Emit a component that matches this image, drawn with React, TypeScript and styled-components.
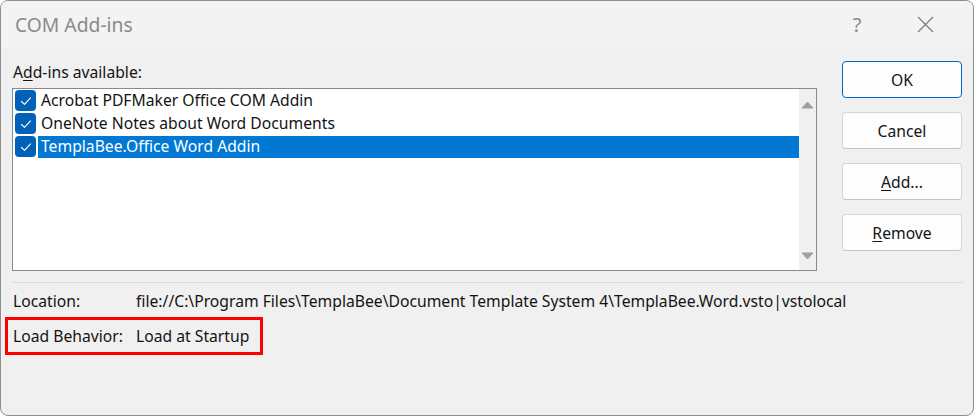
import React from "react";
import styled, { createGlobalStyle } from "styled-components";

const Global = createGlobalStyle`
  html, body { margin: 0; padding: 0; background: #ffffff; }
  body { font-family: "Noto Sans", "Open Sans", "Liberation Sans", sans-serif; }
  * { box-sizing: border-box; }
`;

const Window = styled.div`
  width: 974px;
  height: 416px;
  border: 1px solid #8e8e8e;
  border-radius: 8px;
  overflow: hidden;
  background: #f0f0f0;
  display: flex;
  flex-direction: column;
  color: #141414;
  font-size: 15.7px;
`;

const TitleBar = styled.div`
  height: 47px;
  flex: none;
  background: #f3f3f3;
  display: flex;
  align-items: center;
  padding-left: 14px;
`;

const Title = styled.div`
  flex: 1;
  font-size: 19.3px;
  color: #8a8a8a;
`;

const TitleButton = styled.div<{ $w: number }>`
  width: ${(p) => p.$w}px;
  height: 47px;
  display: flex;
  align-items: center;
  justify-content: center;
  color: #8a8a8a;
  font-size: 20px;
`;

const Body = styled.div`
  flex: 1;
  padding: 13px 11px 0 11px;
  display: flex;
  flex-direction: column;
`;

const Main = styled.div`
  display: grid;
  grid-template-columns: 805px 120px;
  column-gap: 25px;
`;

const ListColumn = styled.div`
  padding-top: 1px;
  display: flex;
  flex-direction: column;
`;

const Label = styled.div`
  line-height: 20px;
  height: 20px;
  margin-bottom: 6px;
  padding-left: 1px;
`;

const ListBox = styled.div`
  height: 183px;
  background: #ffffff;
  border: 1px solid #868a91;
  display: flex;
`;

const Items = styled.div`
  flex: 1;
  padding: 1px 0 0 2px;
  display: flex;
  flex-direction: column;
  gap: 2px;
`;

const Item = styled.div`
  display: flex;
  align-items: center;
  height: 21px;
`;

const Check = styled.div`
  width: 21px;
  height: 21px;
  border-radius: 4px;
  background: #0061b8;
  flex: none;
  display: flex;
  align-items: center;
  justify-content: center;
`;

const ItemText = styled.div<{ $selected?: boolean }>`
  flex: 1;
  height: 22px;
  line-height: 21px;
  margin-left: 2px;
  padding-left: 3px;
  background: ${(p) => (p.$selected ? "#0078d4" : "transparent")};
  color: ${(p) => (p.$selected ? "#ffffff" : "#141414")};
  white-space: nowrap;
`;

const ScrollBar = styled.div`
  width: 17px;
  background: #f0f0f0;
  display: flex;
  flex-direction: column;
  justify-content: space-between;
  align-items: center;
  padding: 12px 0 10px 0;
`;

const ButtonColumn = styled.div`
  display: flex;
  flex-direction: column;
  gap: 14px;
`;

const Button = styled.div<{ $default?: boolean }>`
  height: 37px;
  border-radius: 4px;
  background: #fdfdfd;
  border: 1px solid ${(p) => (p.$default ? "#0067c0" : "#d6d6d6")};
  border-bottom-color: ${(p) => (p.$default ? "#0067c0" : "#c4c4c4")};
  display: flex;
  align-items: center;
  justify-content: center;
  color: #141414;
`;

const Separator = styled.div`
  height: 1px;
  background: #dadada;
  margin: 11px 0 0 0;
  width: 951px;
`;

const Info = styled.div`
  display: flex;
  flex-direction: column;
  padding-left: 1px;
  padding-top: 7px;
`;

const Row = styled.div<{ $highlight?: boolean }>`
  display: flex;
  align-items: center;
  height: ${(p) => (p.$highlight ? "38px" : "22px")};
  ${(p) =>
    p.$highlight
      ? `
    align-self: flex-start;
    margin-top: 5px;
    margin-left: -8px;
    border: 3px solid #ff0000;
    padding: 0 11px 1px 5px;
  `
      : ""}
`;

const RowLabel = styled.div`
  width: 123px;
  flex: none;
`;

const RowValue = styled.div`
  white-space: nowrap;
`;

const Mn = styled.span`
  text-decoration: underline;
  text-underline-offset: 2px;
`;

const CheckMark = () => (
  <svg width="14" height="14" viewBox="0 0 14 14">
    <path d="M2.5 7.5 L5.5 10.3 L11.5 3.8" fill="none" stroke="#ffffff" strokeWidth="1.1" strokeLinecap="round" strokeLinejoin="round" />
  </svg>
);

const Arrow = ({ down }: { down?: boolean }) => (
  <svg width="13" height="8" viewBox="0 0 13 8">
    <path
      d={down ? "M1 1 L12 1 L6.5 7 Z" : "M1 7 L12 7 L6.5 1 Z"}
      fill="#a0a0a0"
      stroke="#a0a0a0"
      strokeWidth="1"
      strokeLinejoin="round"
    />
  </svg>
);

const CloseIcon = () => (
  <svg width="17" height="17" viewBox="0 0 17 17">
    <path d="M1 1 L16 16 M16 1 L1 16" stroke="#7a7a7a" strokeWidth="1.2" fill="none" />
  </svg>
);

const items = [
  { name: "Acrobat PDFMaker Office COM Addin", selected: false },
  { name: "OneNote Notes about Word Documents", selected: false },
  { name: "TemplaBee.Office Word Addin", selected: true },
];

export default function App() {
  return (
    <>
      <Global />
      <Window>
        <TitleBar>
          <Title>COM Add-ins</Title>
          <TitleButton $w={60}>?</TitleButton>
          <TitleButton $w={76}>
            <CloseIcon />
          </TitleButton>
          <div style={{ width: 10 }} />
        </TitleBar>
        <Body>
          <Main>
            <ListColumn>
              <Label>
                A<Mn>d</Mn>d-ins available:
              </Label>
              <ListBox>
                <Items>
                  {items.map((it) => (
                    <Item key={it.name}>
                      <Check>
                        <CheckMark />
                      </Check>
                      <ItemText $selected={it.selected}>{it.name}</ItemText>
                    </Item>
                  ))}
                </Items>
                <ScrollBar>
                  <Arrow />
                  <Arrow down />
                </ScrollBar>
              </ListBox>
            </ListColumn>
            <ButtonColumn>
              <Button $default>OK</Button>
              <Button>Cancel</Button>
              <Button>
                <span>
                  <Mn>A</Mn>dd...
                </span>
              </Button>
              <Button>
                <span>
                  <Mn>R</Mn>emove
                </span>
              </Button>
            </ButtonColumn>
          </Main>
          <Separator />
          <Info>
            <Row>
              <RowLabel>Location:</RowLabel>
              <RowValue>file://C:\Program Files\TemplaBee\Document Template System 4\TemplaBee.Word.vsto|vstolocal</RowValue>
            </Row>
            <Row $highlight>
              <RowLabel>Load Behavior:</RowLabel>
              <RowValue>Load at Startup</RowValue>
            </Row>
          </Info>
        </Body>
      </Window>
    </>
  );
}
